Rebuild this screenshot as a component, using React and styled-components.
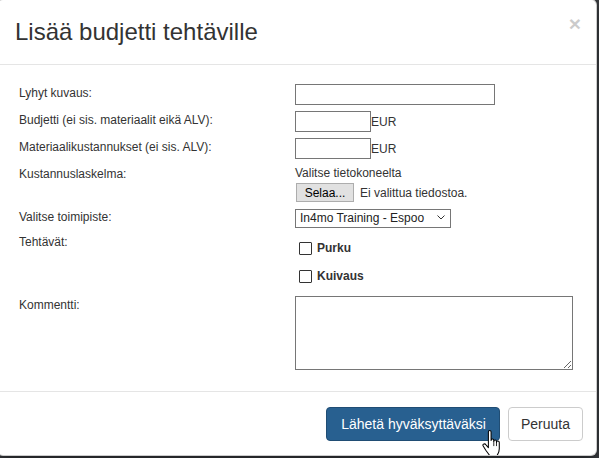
import React from 'react';
import styled, { createGlobalStyle } from 'styled-components';

const Global = createGlobalStyle`
  html, body { margin: 0; padding: 0; }
  body {
    background: #3a3d41;
    font-family: "Liberation Sans", Arial, sans-serif;
    color: #333;
    overflow: hidden;
  }
`;

const Page = styled.div`
  width: 599px;
  height: 458px;
  overflow: hidden;
`;

const Modal = styled.div`
  box-sizing: border-box;
  width: 600px;
  margin: -1px 0 0 -3px;
  background: #fff;
  border: 1px solid rgba(0, 0, 0, 0.2);
  border-radius: 6px;
  box-shadow: 0 5px 15px rgba(0, 0, 0, 0.5);
  overflow: hidden;
`;

const Header = styled.div`
  display: flex;
  align-items: flex-start;
  justify-content: space-between;
  padding: 15px 15px 15px 17px;
  border-bottom: 1px solid #e5e5e5;
`;

const Title = styled.h4`
  margin: 0;
  font-size: 24px;
  line-height: 34px;
  font-weight: 400;
  color: #333;
`;

const Close = styled.button`
  background: none;
  border: 0;
  padding: 0;
  margin-top: -2px;
  font-family: "Liberation Sans", Arial, sans-serif;
  font-size: 21px;
  font-weight: 700;
  line-height: 1;
  color: #000;
  opacity: 0.2;
  cursor: pointer;
`;

const Body = styled.div`
  display: grid;
  grid-template-columns: 276px 1fr;
  row-gap: 6px;
  padding: 19px 15px 21px 21px;
`;

const Label = styled.div`
  font-size: 12px;
  line-height: 16px;
  padding-top: 1px;
  color: #333;
`;

const Field = styled.div`
  display: flex;
  align-items: ${(p) => (p.$column ? 'stretch' : 'center')};
  flex-direction: ${(p) => (p.$column ? 'column' : 'row')};
`;

const TextInput = styled.input`
  box-sizing: border-box;
  width: ${(p) => p.$w}px;
  height: 21px;
  margin: 0;
  padding: 1px 3px;
  border: 1px solid #767676;
  border-radius: 0;
  font-family: "Liberation Sans", Arial, sans-serif;
  font-size: 12px;
  background: #fff;
`;

const Unit = styled.span`
  font-size: 12px;
  color: #333;
`;

const Hint = styled.div`
  font-size: 12px;
  line-height: 16px;
  color: #333;
`;

const FileRow = styled.div`
  display: flex;
  align-items: center;
  gap: 6px;
  margin-top: 2px;
  padding-left: 1px;
`;

const FileButton = styled.button`
  box-sizing: border-box;
  width: 58px;
  height: 19px;
  margin: 0;
  padding: 0;
  border: 1px solid #adadad;
  border-radius: 0;
  background: #e1e1e1;
  font-family: "Liberation Sans", Arial, sans-serif;
  font-size: 12px;
  color: #000;
`;

const FileStatus = styled.span`
  font-size: 12px;
  color: #333;
`;

const SelectWrap = styled.div`
  position: relative;
  width: 156px;
  height: 19px;
`;

const Select = styled.select`
  appearance: none;
  box-sizing: border-box;
  width: 100%;
  height: 100%;
  margin: 0;
  padding: 0 0 0 4px;
  border: 1px solid #767676;
  border-radius: 0;
  background: #fff;
  font-family: "Liberation Sans", Arial, sans-serif;
  font-size: 12px;
  color: #222;
`;

const Chevron = styled.svg`
  position: absolute;
  right: 6px;
  top: 7px;
  pointer-events: none;
`;

const Checks = styled.div`
  display: flex;
  flex-direction: column;
  gap: 12px;
  padding: 7px 0 6px 4px;
`;

const CheckItem = styled.label`
  display: flex;
  align-items: center;
  gap: 5px;
  height: 16px;
  font-size: 12px;
  font-weight: 700;
  color: #333;
`;

const Box = styled.input.attrs({ type: 'checkbox' })`
  appearance: none;
  box-sizing: border-box;
  margin: 0;
  width: 13px;
  height: 13px;
  border: 1px solid #333;
  border-radius: 1px;
  background: #fff;
`;

const TextArea = styled.textarea`
  display: block;
  box-sizing: border-box;
  width: 278px;
  height: 74px;
  margin: 0;
  border: 1px solid #767676;
  border-radius: 0;
  font-family: "Liberation Sans", Arial, sans-serif;
  font-size: 12px;
`;

const Footer = styled.div`
  position: relative;
  display: flex;
  justify-content: flex-end;
  gap: 8px;
  padding: 15px 13px 14px 15px;
  border-top: 1px solid #e5e5e5;
`;

const Button = styled.button`
  box-sizing: border-box;
  margin: 0;
  padding: ${(p) => (p.$primary ? '6px 13px 6px 14px' : '6px 12px')};
  border: 1px solid ${(p) => (p.$primary ? '#204d74' : '#ccc')};
  border-radius: 4px;
  background: ${(p) => (p.$primary ? '#286090' : '#fff')};
  color: ${(p) => (p.$primary ? '#fff' : '#333')};
  font-family: "Liberation Sans", Arial, sans-serif;
  font-size: 14px;
  line-height: 20px;
  cursor: pointer;
`;

const Cursor = styled.svg`
  position: absolute;
  right: 95px;
  top: 38px;
  pointer-events: none;
`;

export default function App() {
  return (
    <Page>
      <Global />
      <Modal>
        <Header>
          <Title>Lisää budjetti tehtäville</Title>
          <Close type="button">×</Close>
        </Header>
        <Body>
          <Label>Lyhyt kuvaus:</Label>
          <Field>
            <TextInput $w={200} />
          </Field>

          <Label>Budjetti (ei sis. materiaalit eikä ALV):</Label>
          <Field>
            <TextInput $w={76} />
            <Unit>EUR</Unit>
          </Field>

          <Label>Materiaalikustannukset (ei sis. ALV):</Label>
          <Field>
            <TextInput $w={76} />
            <Unit>EUR</Unit>
          </Field>

          <Label>Kustannuslaskelma:</Label>
          <Field $column>
            <Hint>Valitse tietokoneelta</Hint>
            <FileRow>
              <FileButton type="button">Selaa...</FileButton>
              <FileStatus>Ei valittua tiedostoa.</FileStatus>
            </FileRow>
          </Field>

          <Label>Valitse toimipiste:</Label>
          <Field>
            <SelectWrap>
              <Select defaultValue="espoo">
                <option value="espoo">In4mo Training - Espoo</option>
              </Select>
              <Chevron width="8" height="5" viewBox="0 0 8 5">
                <path d="M0.5 0.5 L4 4 L7.5 0.5" fill="none" stroke="#333" strokeWidth="1" />
              </Chevron>
            </SelectWrap>
          </Field>

          <Label>Tehtävät:</Label>
          <Checks>
            <CheckItem>
              <Box />
              Purku
            </CheckItem>
            <CheckItem>
              <Box />
              Kuivaus
            </CheckItem>
          </Checks>

          <Label>Kommentti:</Label>
          <Field>
            <TextArea />
          </Field>
        </Body>
        <Footer>
          <Button $primary type="button">Lähetä hyväksyttäväksi</Button>
          <Button type="button">Peruuta</Button>
          <Cursor width="19" height="27" viewBox="0 0 18 26">
            <path
              d="M6 2 C6 1 6.6 0.5 7.3 0.5 C8 0.5 8.6 1 8.6 2 V10 C8.6 9 9.2 8.6 9.9 8.6 C10.6 8.6 11.2 9 11.2 10 V11 C11.2 10 11.8 9.6 12.5 9.6 C13.2 9.6 13.8 10 13.8 11 V12 C13.8 11 14.4 10.6 15.1 10.6 C15.8 10.6 16.5 11 16.5 12 V18 C16.5 21 15.5 23 14 25 H7.5 C6.5 23.5 5 21.5 3.5 19.5 L1 15.5 C0.4 14.5 0.8 13.6 1.7 13.4 C2.6 13.2 3.3 13.7 3.9 14.5 L6 17 Z"
              fill="#fff"
              stroke="#000"
              strokeWidth="1"
              strokeLinejoin="round"
            />
            <path d="M11.2 11 V15.5 M13.8 12 V15.5" stroke="#000" strokeWidth="0.8" fill="none" />
          </Cursor>
        </Footer>
      </Modal>
    </Page>
  );
}
